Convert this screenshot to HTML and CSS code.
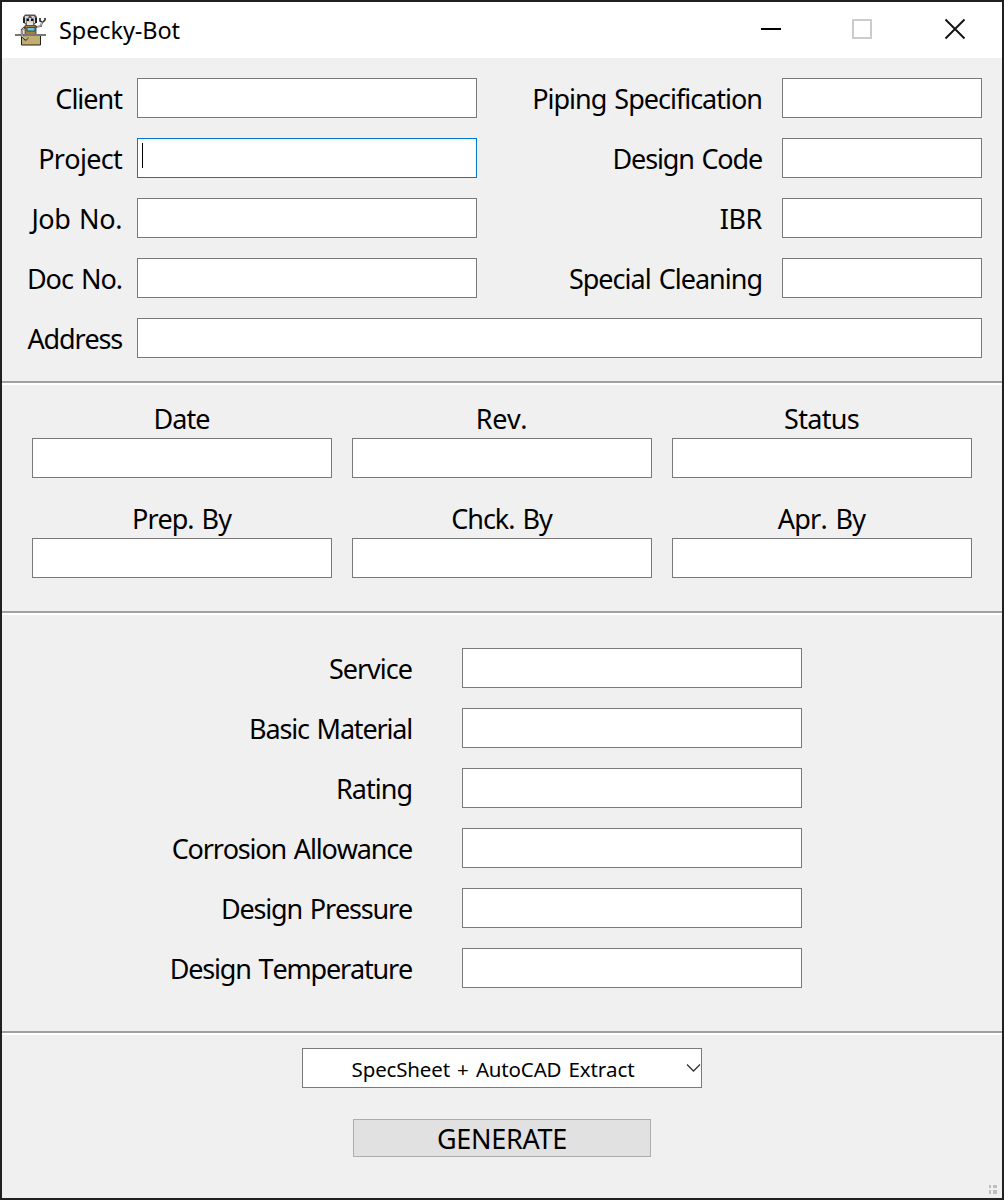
FILE: index.html
```html
<!DOCTYPE html>
<html lang="en">
<head>
<meta charset="utf-8">
<title>Specky-Bot</title>
<link rel="stylesheet" href="styles.css">
</head>
<body>
<div class="window">
  <header class="titlebar">
    <svg class="logo" width="32" height="34" viewBox="0 0 32 34">
      <path d="M10 1.500h10l2 2.500v5l-3 3h-8l-3-3V4z" fill="#555"/>
      <path d="M8 5h2v5H8zM20 5h2v5h-2z" fill="#222"/>
      <path d="M10 3h4l-1 2h-2v5h-1zM16 3h3l1 2v5h-1V5h-2z" fill="#d4d4d4"/>
      <path d="M11 5h8l-1 7h-6z" fill="#d0d0d0"/>
      <path d="M11.500 5.500h2.500v2.500h-2.500zM16 5.500h2.500v2.500H16z" fill="#111"/>
      <path d="M12 9.500h6v2.500h-6z" fill="#e6e6e6"/>
      <path d="M10 12.500h11v9.500H10z" fill="#a87d34" stroke="#333" stroke-width=".8"/>
      <path d="M12 14.500h8v3.500h-8z" fill="#65cbe2" stroke="#222" stroke-width=".7"/>
      <path d="M21 14l5-1 1-4M25 5v3l2 1h1l2-2V5" fill="none" stroke="#333" stroke-width="1.700"/>
      <path d="M22 13.800l4-1 1-4" fill="none" stroke="#c8c8c8" stroke-width=".9"/>
      <path d="M6.500 22h19v10h-19z" fill="#c2ad70" stroke="#222"/>
      <path d="M0 22h31" stroke="#777" stroke-width="2"/>
      <path d="M10 14l-3 3v6l4 4" fill="none" stroke="#333" stroke-width="2.300"/>
      <path d="M9 15l-2 3v5l4 3" fill="none" stroke="#ccc" stroke-width="1.200"/>
      <path d="M10 28l2-1.500 1.500-2" fill="none" stroke="#7a6a3a" stroke-width="1.200"/>
    </svg>
    <h1 class="title">Specky-Bot</h1>
    <div class="controls">
      <svg width="22" height="22" viewBox="0 0 22 22"><path d="M1 11h20" stroke="#000" stroke-width="2"/></svg>
      <svg width="22" height="22" viewBox="0 0 22 22"><path d="M1 2h18v18H1z" fill="none" stroke="#ccc" stroke-width="2"/></svg>
      <svg width="22" height="22" viewBox="0 0 22 22"><path d="M1.500 1.500l19 19M20.500 1.500l-19 19" stroke="#111" stroke-width="1.900"/></svg>
    </div>
  </header>
  <section class="project">
    <label class="label" for="client">Client</label><input class="field" id="client">
    <label class="label far" for="spec">Piping Specification</label><input class="field" id="spec">
    <label class="label loose" for="project">Project</label><div class="focused"><input class="field" id="project"><span class="caret"></span></div>
    <label class="label far tight" for="code">Design Code</label><input class="field" id="code">
    <label class="label looser" for="job">Job No.</label><input class="field" id="job">
    <label class="label far looser" for="ibr">IBR</label><input class="field" id="ibr">
    <label class="label" for="doc">Doc No.</label><input class="field" id="doc">
    <label class="label far" for="cleaning">Special Cleaning</label><input class="field" id="cleaning">
    <label class="label tight" for="address">Address</label><input class="field wide" id="address">
  </section>
  <hr class="rule">
  <section class="revision">
    <div class="stack"><label class="label" for="date">Date</label><input class="field" id="date"></div>
    <div class="stack"><label class="label looser" for="rev">Rev.</label><input class="field" id="rev"></div>
    <div class="stack"><label class="label loose" for="status">Status</label><input class="field" id="status"></div>
    <div class="stack"><label class="label" for="prep">Prep. By</label><input class="field" id="prep"></div>
    <div class="stack"><label class="label" for="chck">Chck. By</label><input class="field" id="chck"></div>
    <div class="stack"><label class="label loose" for="apr">Apr. By</label><input class="field" id="apr"></div>
  </section>
  <hr class="rule">
  <section class="design">
    <label class="label" for="service">Service</label><input class="field" id="service">
    <label class="label tight" for="material">Basic Material</label><input class="field" id="material">
    <label class="label" for="rating">Rating</label><input class="field" id="rating">
    <label class="label tight" for="corrosion">Corrosion Allowance</label><input class="field" id="corrosion">
    <label class="label tight" for="pressure">Design Pressure</label><input class="field" id="pressure">
    <label class="label tight" for="temperature">Design Temperature</label><input class="field" id="temperature">
  </section>
  <hr class="rule">
  <footer class="actions">
    <div class="combo"><span class="choice">SpecSheet + AutoCAD Extract</span>
      <svg width="15" height="10" viewBox="0 0 15 10"><path d="M1 1.500l6.500 6.500L14 1.500" fill="none" stroke="#333" stroke-width="1.300"/></svg>
    </div>
    <button class="generate">GENERATE</button>
    <svg class="grip" width="8" height="9" viewBox="0 0 8 9"><path d="M0 0h2v3H0zM4 0h4v3H4zM0 5h2v4H0zM4 5h4v4H4z" fill="#bfbfbf"/></svg>
  </footer>
</div>
</body>
</html>
```
FILE: styles.css
```css
* { box-sizing: border-box; }
body { margin: 0; font-family: "Noto Sans", sans-serif; font-kerning: none; color: #000; }
.window {
  width: 1004px; height: 1200px;
  display: flex; flex-direction: column;
  background: #f0f0f0; border: 2px solid #202020;
}
.titlebar {
  height: 56px; flex: none;
  display: flex; align-items: center;
  padding: 0 36px 0 13px; background: #fff;
}
.logo { flex: none; }
.title { margin: 0 0 0 12px; font-size: 23.500px; font-weight: 400; line-height: 32px; letter-spacing: -0.100px; }
.controls { margin-left: auto; display: flex; gap: 70px; padding-bottom: 2px; }
.controls svg { display: block; }
.label {
  font-size: 27px; line-height: 40px; height: 40px;
  letter-spacing: -1px; word-spacing: 2px; white-space: nowrap;
  text-align: right; padding-top: 1px;
}
.loose { letter-spacing: -0.700px; }
.looser { letter-spacing: -0.400px; }
.tight { letter-spacing: -1.180px; }
.field {
  display: block; width: 100%; height: 40px; margin: 0; padding: 0 6px;
  border: 1px solid #7a7a7a; border-radius: 0; background: #fff;
  font: inherit; font-size: 24px; outline: none;
}
.project {
  height: 323px; flex: none;
  display: grid; grid-template-columns: 135px 340px 305px 200px;
  grid-auto-rows: 40px; row-gap: 20px; padding-top: 20px;
}
.project .label { padding-right: 15px; }
.project .far { padding-right: 20px; }
.wide { grid-column: 2 / 5; }
.focused { position: relative; }
.focused .field { border-color: #0078d7; }
.caret { position: absolute; left: 5px; top: 5px; width: 1px; height: 25px; background: #000; }
.rule {
  width: 100%; height: 4px; flex: none; margin: 0; border: 0;
  border-top: 2px solid #a0a0a0; border-bottom: 2px solid #fff;
}
.revision {
  height: 226px; flex: none;
  display: grid; grid-template-columns: repeat(3, 300px);
  grid-auto-rows: 80px; gap: 20px; padding: 13px 30px 0;
}
.stack { display: flex; flex-direction: column; }
.stack .label { text-align: center; padding: 1px 1px 0 0; }
.design {
  height: 416px; flex: none;
  display: grid; grid-template-columns: 410px 340px;
  grid-auto-rows: 40px; gap: 20px 50px; padding-top: 33px;
}
.actions {
  position: relative; flex: 1;
  display: flex; flex-direction: column; align-items: center; padding-top: 13px;
}
.combo {
  width: 400px; height: 40px;
  display: flex; align-items: center;
  background: #fff; border: 1px solid #7a7a7a;
}
.choice { flex: 1; text-align: center; padding: 1px 3px 0 0; font-size: 20.500px; letter-spacing: -0.150px; word-spacing: 2px; }
.generate {
  width: 298px; height: 38px; margin-top: 31px; padding: 2px 0 0;
  background: #e1e1e1; border: 1px solid #adadad; border-radius: 0;
  font-family: inherit; font-size: 27px; line-height: 32px; letter-spacing: -0.300px; color: #000;
}
.grip { position: absolute; right: 5px; bottom: 4px; }
```
